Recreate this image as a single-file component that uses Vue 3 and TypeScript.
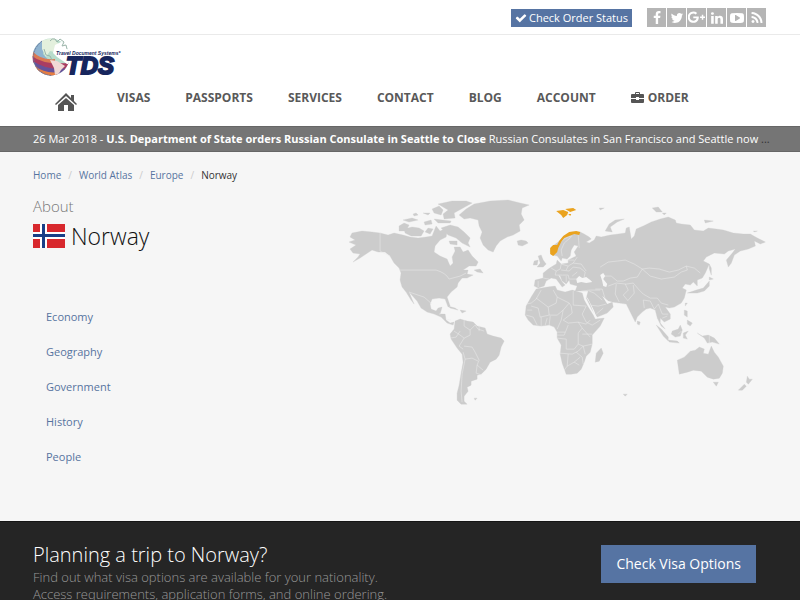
<script setup lang="ts">
interface Social { name: string; path: string }

const socials: Social[] = [
  { name: 'Facebook', path: 'M1343 12v264h-157q-86 0-116 36t-30 108v189h293l-39 296h-254v759h-306v-759h-255v-296h255v-218q0-186 104-288.500t277-102.500q147 0 228 12z' },
  { name: 'Twitter', path: 'M1684 408q-67 98-162 167 1 14 1 42 0 130-38 259.500t-115.500 248.500-184.500 210.500-258 146-323 54.500q-271 0-496-145 35 4 78 4 225 0 401-138-105-2-188-64.500t-114-159.500q33 5 61 5 43 0 85-11-112-23-185.500-111.500t-73.500-205.500v-4q68 38 146 41-66-44-105-115t-39-154q0-88 44-163 121 149 294.500 238.500t371.500 99.500q-8-38-8-74 0-134 94.500-228.500t228.500-94.500q140 0 236 102 109-21 205-78-37 115-142 178 93-10 186-50z' },
  { name: 'Google Plus', path: 'M1130 790q8 42 8 84 0 170-71 303t-203 207-302 74q-122 0-233-47t-191-128-127-191-47-232 47-232 127-191 191-128 233-47q234 0 402 157l-163 156q-96-93-239-93-101 0-186 51t-135 138-50 189 50 189 135 138 186 51q68 0 124-19t93-47 64-65 39-69 17-62H558V790zM1792 780v160h-180v180h-160V940h-180V780h180V600h160v180z' },
  { name: 'LinkedIn', path: 'M477 625v991h-330v-991h330zm21-306q1 73-50.500 122t-135.500 49h-2q-82 0-132-49t-50-122q0-74 51.500-122.500t134.500-48.500 133 48.500 51 122.500zm1166 729v568h-329v-530q0-105-40.500-164.500t-126.500-59.500q-63 0-105.500 34.500t-63.500 85.500q-11 30-11 81v553h-329q2-399 2-647t-1-296l-1-48h329v144h-2q20-32 41-56t56.500-52 87-43.500 114.500-15.500q171 0 275 113.500t104 332.500z' },
  { name: 'YouTube', path: 'M1280 896q0-37-30-54l-512-320q-31-20-65-2-33 18-33 56v640q0 38 33 56 16 8 31 8 20 0 34-10l512-320q30-17 30-54zm512 0q0 96-1 150t-8.500 136.500-22.500 147.500q-16 73-69 123t-124 58q-222 25-671 25t-671-25q-71-8-124.500-58t-69.500-123q-14-65-21.500-147.500t-8.500-136.500-1-150 1-150 8.500-136.500 22.500-147.500q16-73 69-123t124-58q222-25 671-25t671 25q71 8 124.500 58t69.500 123q14 65 21.500 147.500t8.500 136.500 1 150z' },
  { name: 'RSS', path: 'M576 1344q0 80-56 136t-136 56-136-56-56-136 56-136 136-56 136 56 56 136zm512 123q2 28-17 48-18 21-47 21h-135q-25 0-43-16.500t-20-41.500q-22-229-184.500-391.500t-391.500-184.500q-25-2-41.500-20t-16.500-43v-135q0-29 21-47 17-17 43-17h5q160 13 306 80.500t259 181.500q114 113 181.500 259t80.500 306zm512 2q2 27-18 47-18 20-46 20h-143q-26 0-44.500-17.500t-19.500-42.500q-12-215-101-408.500t-231.500-336-336-231.500-408.500-102q-25-1-42.500-19.500t-17.500-43.500v-143q0-28 20-46 18-18 44-18h3q262 13 501.500 120t425.500 294q187 186 294 425.500t120 501.500z' },
]

const menu: string[] = ['VISAS', 'PASSPORTS', 'SERVICES', 'CONTACT', 'BLOG', 'ACCOUNT']
const crumbs: string[] = ['Home', 'World Atlas', 'Europe']
const topics: string[] = ['Economy', 'Geography', 'Government', 'History', 'People']

const land: string[] = [
  // North and Central America
  'M352 233 362 231 372 232 380 233 388 235 394 233 403 235 410 237 418 238 426 237 432 236 434 231 436 226 440 231 444 229 447 232 446 237 440 240 435 246 434 252 440 256 447 259 450 266 453 263 452 257 455 251 454 247 460 247 463 252 468 250 472 256 478 262 476 266 469 266 463 270 468 270 467 274 473 275 467 278 462 278 458 283 457 287 451 292 447 297 450 306 448 307 445 299 439 298 432 299 430 304 431 309 436 311 438 308 442 307 440 314 445 314 446 320 450 323 454 322 453 325 447 323 441 317 434 314 427 312 421 308 417 301 409 292 414 304 411 300 406 292 402 287 400 280 401 273 399 268 394 263 390 256 385 252 378 252 372 250 366 254 360 258 353 262 358 257 360 254 353 253 350 249 356 245 349 242 355 240 350 237z',
  // Canadian islands
  'M399 226 404 223 409 225 406 231 399 231zM404 229 412 227 419 228 424 231 421 236 411 236 405 233zM403 220 412 218 418 220 409 222zM424 222 431 220 432 224 425 225zM434 219 451 221 450 223 438 223zM428 228 433 229 430 234 425 232zM432 209 439 206 443 210 441 215 434 213zM438 204 452 201 466 201 472 203 463 208 454 213 455 218 444 219 443 214 448 210zM441 228 450 225 458 227 464 232 470 238 468 243 470 247 462 243 456 238 448 235zM449 241 457 241 457 245 450 244zM474 270 480 269 483 273 477 272zM413 214 416 213 418 215 414 216zM423 213 430 213 428 215z',
  // Greenland and Iceland
  'M459 215 466 209 474 204 490 201 508 200 520 203 529 205 522 208 521 214 524 220 519 225 520 231 513 235 507 237 500 241 496 246 493 252 488 250 483 245 480 238 482 232 479 226 478 220 470 218 464 219zM517 241 521 240 526 241 528 243 522 246 518 245z',
  // Caribbean
  'M448 306 455 308 458 310 450 308zM460 310 466 311 462 313z',
  // South America
  'M455 321 460 319 467 321 473 322 477 326 485 328 487 334 493 336 501 338 504 341 501 347 499 355 496 359 490 362 486 369 481 374 477 375 477 379 471 381 471 385 467 387 468 391 464 396 464 401 467 404 461 404 457 400 457 393 459 385 461 373 463 362 462 354 457 348 451 339 450 334 454 329zM474 398 477 398 475 400z',
  // Europe and Asia
  'M580 232 584 234 589 237 591 239 586 242 589 243 594 240 596 236 601 237 610 235 618 234 625 233 626 228 629 227 630 233 631 239 634 236 636 229 643 226 651 222 660 219 668 217 675 220 676 223 681 224 690 225 694 230 703 231 708 228 716 229 723 230 733 233 743 234 750 234 757 238 765 242 760 244 754 241 755 246 748 249 740 251 734 255 731 263 728 267 726 260 732 253 735 249 728 251 724 254 714 253 706 257 703 261 709 264 705 273 702 278 697 280 697 286 693 282 690 285 685 284 682 288 686 290 684 298 681 303 674 307 669 308 665 307 670 314 670 319 664 322 660 318 660 323 665 329 661 326 657 318 655 310 650 308 646 309 642 312 637 317 635 322 631 314 628 308 626 304 619 303 612 302 613 307 607 313 597 317 592 310 586 298 588 291 581 291 575 291 577 286 570 284 569 280 566 284 562 281 560 276 558 275 562 282 565 285 562 287 556 279 551 278 546 281 544 286 538 288 534 286 535 280 543 278 543 273 548 269 551 267 556 264 557 260 561 264 568 263 568 260 572 258 576 256 574 252 578 246 574 245 571 250 570 256 567 259 562 258 561 261 557 256 552 255 550 251 551 247 558 242 564 236 572 232z',
  // British Isles
  'M538 256 541 255 543 260 546 264 543 267 537 267 540 263zM534 261 538 260 537 265 533 265z',
  // Africa
  'M536 289 547 287 555 286 557 290 565 292 572 290 582 293 584 300 588 307 593 315 595 319 604 318 600 326 592 335 592 344 590 352 586 356 584 362 581 369 577 373 571 374 566 374 562 363 560 354 561 345 557 338 557 332 554 327 549 325 541 326 533 325 528 320 525 315 526 306 531 297zM601 348 603 353 599 361 595 362 596 353z',
  // Arctic islands
  'M605 231 609 224 615 220 624 219 617 222 610 227 612 232zM652 208 658 207 662 212 656 212zM662 213 666 213 664 215zM704 220 713 221 705 223zM753 231 757 231 754 232zM599 208 604 208 600 210z',
  // Japan, Taiwan and the Philippines
  'M709 264 711 268 711 275 709 269zM709 277 713 279 709 280zM709 281 709 286 704 291 697 293 687 293 696 290 703 288zM685 303 687 303 685 306zM684 310 687 311 687 317 684 315zM687 320 692 323 690 326 687 324zM637 321 640 322 639 325 637 324z',
  // Indonesia and New Guinea
  'M656 325 661 329 668 337 668 341 663 336zM668 340 677 341 679 343 669 342zM672 331 678 329 680 325 682 330 680 336 675 337 671 334zM683 333 688 331 685 335 687 339 683 338zM697 333 702 336 708 335 714 338 719 344 712 342 707 343 704 338z',
  // Australia and New Zealand
  'M677 360 684 357 690 351 695 350 699 347 704 349 703 353 708 354 711 346 714 352 718 357 723 366 722 373 719 378 713 379 707 377 704 374 701 371 693 370 687 372 679 374zM713 382 718 382 716 386zM747 376 749 379 752 379 748 384 746 382zM744 384 746 386 742 390 738 390zM623 394 627 394 625 396z',
]

// Inland waters and gulfs, painted in the page colour over the land.
const water = 'M576 279 579 276 582 278 586 277 590 280 592 282 586 283 581 282 577 283zM600 275 603 273 605 276 603 279 607 284 606 287 603 286 602 281zM585 295 590 304 595 317 597 319 594 311 588 299zM602 296 608 301 612 302 607 304z'

const borders: string[] = [
  'M380 232V251L390 256M399 270H436Q446 273 449 279L460 276 466 273M409 292 418 295 424 297 432 304M439 314 443 313M446 319 451 320',
  'M464 320 464 326 470 330 475 325 478 329 484 331M454 331 460 335 464 338 459 346 463 349M464 346 472 347 475 352 479 360 477 365 483 370M463 352 465 359 472 358 478 361M465 359 462 374 461 391 462 402M477 365 476 373 482 375M450 338 456 337 460 331M470 330V335L464 338M479 325V331',
  'M559 244Q564 237 572 236M562 256 561 250 564 243 571 237M578 235 579 248M551 268 556 271 560 269 561 264M543 278 549 279M556 271 555 275 562 275M561 264 568 266 573 263 577 257M561 270 569 271 573 267 580 268 585 272 584 277M562 275 568 275 569 279 577 279M568 266 566 270M573 263 581 264 586 271M566 260 574 260M566 276 566 282M572 276 577 272M538 281V287',
  'M600 267 608 262 617 261 625 260 634 264 642 269 649 268 659 269 669 272 678 270 686 266 694 268 700 273M642 269 650 276 661 279 674 277 681 272 687 270 686 266M604 276 611 276 617 281 623 281 630 278 637 277 642 269M608 286 616 283 626 284 633 283 639 290 643 294 650 298 657 298 661 303 668 305M625 284 628 290 623 295 628 301M616 284 615 294 619 302M628 300 634 293 633 285M589 291 594 293 602 300M595 289 602 289 605 299M581 291 590 290 600 290M590 305 598 306 606 304M596 314 603 308M644 308 643 300 650 301 654 309 658 304M658 304 662 314 668 314M662 318 667 316M699 283 702 280',
  'M541 290 536 299 531 303 526 304M536 298 548 307 556 303 557 297 553 290M557 297 569 303 571 306M573 291 573 305 586 306M531 306 538 308 540 317 549 315 557 315 563 310 569 303M526 315 533 317 537 325M541 326 541 317M545 325 547 318M549 325 550 316M557 329 561 320 563 310M563 320 572 313 571 306M563 320 568 323 578 322 586 324 590 320M586 306 582 314 586 322 592 325 600 320M557 335 564 335 568 325M557 338 566 339 566 349 574 349 578 344 578 333 582 328 578 322M582 328 590 337M559 353 572 354 578 351 583 346 592 344M578 344 583 346 585 354M568 354 567 366 574 362 580 357M567 366 564 370M574 362 579 365M576 352 582 357 583 364M548 307 549 315M527 310H532M557 332H565M582 334H592',
  'M678 334 681 331M709 335V344',
]

const norway = 'M550 248 553 245 557 245 559 241 563 236 569 232 576 231 580 232 579 235 574 234 569 236 564 238 561 242 558 248 557 252 553 256 550 254zM556 211 563 210 568 212 567 215 563 218 561 215zM565 209 573 208 576 210 570 212zM568 214 571 214 570 216z'
</script>

<template>
  <div class="page">
    <header>
      <div class="topbar">
        <a href="#" class="order-status">
          <svg class="tick" viewBox="0 0 1792 1792" aria-hidden="true"><path d="M1671 566q0 40-28 68l-724 724-136 136q-28 28-68 28t-68-28l-136-136-362-362q-28-28-28-68t28-68l136-136q28-28 68-28t68 28l294 295 656-657q28-28 68-28t68 28l136 136q28 28 28 68z" /></svg>
          <span>Check Order Status</span>
        </a>
        <div class="socials">
          <a v-for="s in socials" :key="s.name" href="#" :aria-label="s.name">
            <svg viewBox="0 0 1792 1792" aria-hidden="true"><path :d="s.path" /></svg>
          </a>
        </div>
      </div>

      <div class="brand">
        <a href="#" aria-label="Travel Document Systems">
          <svg class="logo" viewBox="0 0 88 40">
            <defs><clipPath id="globe"><circle cx="18" cy="20" r="18.500" /></clipPath></defs>
            <g clip-path="url(#globe)">
              <path fill="#b8dccb" d="M0 0h36v40H0z" />
              <path fill="#8fb3cf" d="M0 9 9 3 12 9 10 17 18 26 13 29 0 21z" />
              <path fill="#e3f0dd" d="M9 3 21 1 26 8 22 15 17 14 13 20 9 12z" />
              <path fill="#db7a53" d="M-1 14Q9 24 22 22V28Q12 29-1 20z" />
              <path fill="#aa3d62" d="M-1 19Q10 28 36 26V33Q14 34-1 25z" />
              <path fill="#66529a" d="M0 24Q14 34 35 31L30 39H7z" />
              <path fill="#e67d41" d="M2 29Q12 37 26 35L22 40H7z" />
              <path fill="#f1d9d6" d="M17 23 24 24 32 29 28 33 25 38 22 38 21 31z" />
              <path fill="#fff" d="M22 8 30 4 40 9V27H34L30 24 24 20 20 16z" />
            </g>
            <path fill="none" stroke="#9bb5aa" stroke-width="1" d="M17 4q2-3 5-2l2 3 3-3 4 3-2 4 4-1 1 4M11 12l2 6 4 1 2 4" />
            <path fill="none" stroke="#67779d" stroke-width="1" stroke-dasharray="2 1" d="M9 4Q-3 14 2 27 6 37 18 38.500" />
            <text class="logo-tag" x="23" y="18">Travel Document Systems*</text>
            <text class="logo-name" x="33" y="37">TDS</text>
          </svg>
        </a>
      </div>

      <nav class="menu" aria-label="Main">
        <a href="#" class="home" aria-label="Home">
          <svg viewBox="0 0 22 18" aria-hidden="true"><path d="M11 0 16 5V2h3v6l3 3-1 1L11 3 1 12 0 11zM11 5 19 12V18H13V12H9V18H3V12z" /></svg>
        </a>
        <a v-for="m in menu" :key="m" href="#">{{ m }}</a>
        <a href="#" class="order">
          <svg viewBox="0 0 13 11" aria-hidden="true"><path d="M4 2V1q0-1 1-1h3q1 0 1 1v1h3q1 0 1 1v3H8V5H5v1H0V3q0-1 1-1zM5 2h3V1H5zM0 7h5v1h3V7h5v3q0 1-1 1H1q-1 0-1-1z" /></svg>
          <span>ORDER</span>
        </a>
      </nav>
    </header>

    <div class="news">
      <p><a href="#">26 Mar 2018 - <b>U.S. Department of State orders Russian Consulate in Seattle to Close</b> Russian Consulates in San Francisco and Seattle now </a>...</p>
    </div>

    <main>
      <ol class="crumbs">
        <li v-for="c in crumbs" :key="c"><a href="#">{{ c }}</a></li>
        <li>Norway</li>
      </ol>
      <div class="columns">
        <section class="country">
          <h1>
            <small>About</small>
            <span class="name">
              <svg class="flag" viewBox="0 0 32 24" aria-hidden="true">
                <path fill="#d8282d" d="M0 0h32v24H0z" />
                <path fill="#fff" d="M7 0h7v8h18v7H14v9H7v-9H0V8h7z" />
                <path fill="#193f87" d="M9 0h3v10h20v3H12v11H9V13H0v-3h9z" />
              </svg>
              <span>Norway</span>
            </span>
          </h1>
          <ul class="topics">
            <li v-for="t in topics" :key="t"><a href="#">{{ t }}</a></li>
          </ul>
        </section>
        <svg class="map" viewBox="349 198 418 208" role="img" aria-label="World map">
          <path v-for="(d, i) in land" :key="i" class="land" :d="d" />
          <path class="water" :d="water" />
          <path v-for="(d, i) in borders" :key="'b' + i" class="border" :d="d" />
          <path class="chosen" :d="norway" />
        </svg>
      </div>
    </main>

    <section class="trip">
      <div>
        <h2>Planning a trip to Norway?</h2>
        <p>Find out what visa options are available for your nationality.<br>Access requirements, application forms, and online ordering.</p>
      </div>
      <a href="#" class="visa-button">Check Visa Options</a>
    </section>
  </div>
</template>

<style>
body {
  margin: 0;
  background: #f6f6f6;
}
</style>

<style scoped>
.page {
  font-family: "Open Sans", sans-serif;
  font-size: 11px;
  line-height: 18px;
  color: #333;
}
a {
  color: #5674a0;
  text-decoration: none;
}
header {
  background: #fff;
}
.topbar {
  display: flex;
  justify-content: flex-end;
  align-items: flex-start;
  gap: 15px;
  height: 26px;
  padding: 8px 34px 0 33px;
  border-bottom: 1px solid #eaeaea;
}
.order-status {
  display: flex;
  align-items: center;
  gap: 2px;
  margin-top: 1px;
  padding: 0 4px;
  background: #5674a3;
  color: #fff;
}
.tick {
  width: 12px;
  height: 12px;
  fill: #fff;
}
.socials {
  display: flex;
  gap: 1px;
}
.socials a {
  display: flex;
  align-items: center;
  justify-content: center;
  width: 19px;
  height: 19px;
  background: #b5b5b5;
}
.socials svg {
  width: 14px;
  height: 14px;
  fill: #fff;
}
.socials a:nth-child(3) svg {
  width: 17px;
  height: 17px;
}
.brand {
  padding: 2px 33px 0;
}
.brand a,
.logo {
  display: block;
  width: 88px;
}
.logo {
  overflow: visible;
}
.logo text {
  font-family: "Liberation Sans", sans-serif;
  font-weight: bold;
  font-style: italic;
  fill: #17265d;
}
.logo .logo-tag {
  font-size: 5px;
}
.logo .logo-name {
  font-size: 24px;
  stroke: #17265d;
  stroke-width: 2px;
}
.menu {
  display: flex;
  padding: 11px 33px 15px 55px;
  gap: 35px;
  font-size: 12px;
  font-weight: bold;
  line-height: 20px;
}
.menu a {
  color: #595959;
}
.menu svg {
  fill: #555;
}
.home {
  width: 27px;
}
.home svg {
  display: block;
  width: 22px;
  margin-top: 5px;
}
.order {
  display: flex;
  gap: 4px;
}
.order svg {
  width: 13px;
  height: 11px;
  margin-top: 4px;
}
.news {
  padding: 3px 30px 3px 33px;
  background: #757575;
  border-top: 1px solid #666;
  border-bottom: 1px solid #666;
}
.news p {
  margin: 0;
  overflow: hidden;
  white-space: nowrap;
  text-overflow: ellipsis;
}
.news a {
  color: #fff;
}
main {
  padding: 14px 33px 46px;
}
.crumbs {
  display: flex;
  margin: 0;
  padding: 0;
  list-style: none;
  font-size: 10px;
}
.crumbs li + li::before {
  content: "/";
  padding: 0 7px;
  color: #ccc;
}
.columns {
  display: flex;
  justify-content: space-between;
  align-items: flex-start;
  padding-top: 14px;
}
h1 {
  margin: 0;
  font-size: 23px;
  font-weight: 300;
  line-height: 32px;
  color: #111;
}
h1 small {
  display: block;
  font-size: 15px;
  line-height: 16px;
  margin-bottom: 6px;
  color: #777;
}
.name {
  display: flex;
  gap: 6px;
}
.flag {
  width: 32px;
  height: 24px;
  margin-top: 4px;
}
.topics {
  margin: 48px 0 0;
  padding: 0 13px;
  list-style: none;
}
.topics li {
  padding: 8px 0 9px;
}
.map {
  width: 57%;
  height: auto;
}
.land {
  fill: #ccc;
  stroke: #ccc;
  stroke-width: 0.3;
}
.water {
  fill: #f6f6f6;
}
.border {
  fill: none;
  stroke: #ececec;
  stroke-width: 0.5;
}
.chosen {
  fill: #eaa31f;
}
.trip {
  display: flex;
  justify-content: space-between;
  align-items: flex-start;
  padding: 19px 44px 24px 33px;
  background: #252525;
  border-top: 1px solid #151515;
}
.trip h2 {
  margin: 0;
  font-size: 20px;
  font-weight: 300;
  line-height: 28px;
  color: #fff;
}
.trip p {
  margin: 0;
  font-size: 13px;
  font-weight: 300;
  line-height: 17px;
  color: #999;
}
.visa-button {
  margin-top: 4px;
  padding: 9px 15px;
  background: #5674a3;
  color: #fff;
  font-size: 14px;
  line-height: 20px;
}
</style>
